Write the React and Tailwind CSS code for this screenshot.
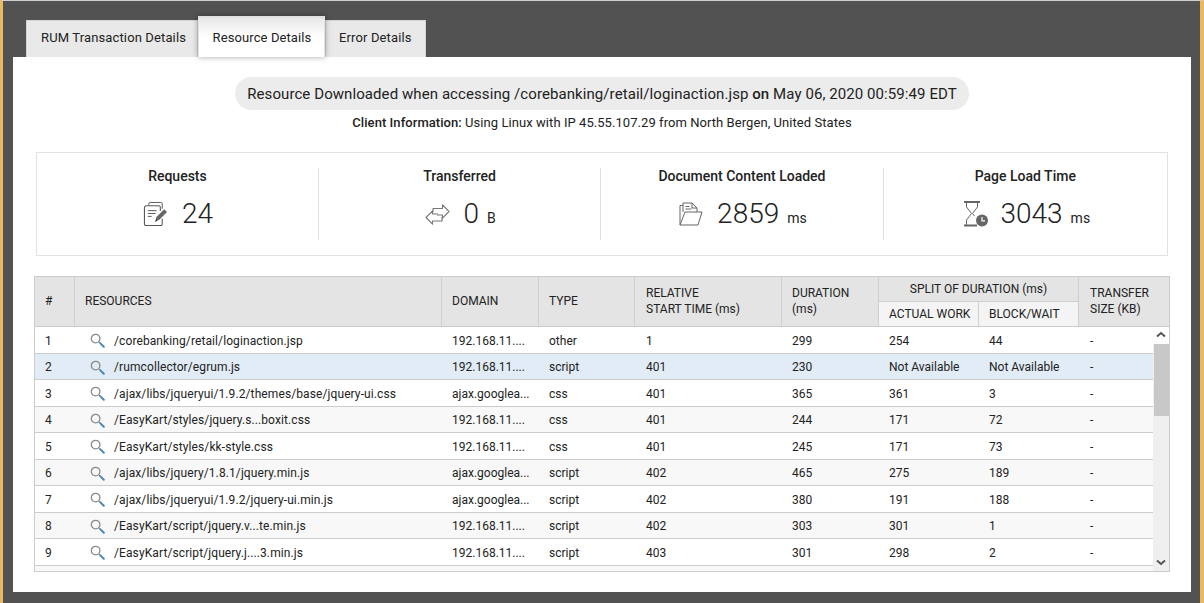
const ROWS = [
  ['1', '/corebanking/retail/loginaction.jsp', '192.168.11....', 'other', '1', '299', '254', '44'],
  ['2', '/rumcollector/egrum.js', '192.168.11....', 'script', '401', '230', 'Not Available', 'Not Available'],
  ['3', '/ajax/libs/jqueryui/1.9.2/themes/base/jquery-ui.css', 'ajax.googlea...', 'css', '401', '365', '361', '3'],
  ['4', '/EasyKart/styles/jquery.s...boxit.css', '192.168.11....', 'css', '401', '244', '171', '72'],
  ['5', '/EasyKart/styles/kk-style.css', '192.168.11....', 'css', '401', '245', '171', '73'],
  ['6', '/ajax/libs/jquery/1.8.1/jquery.min.js', 'ajax.googlea...', 'script', '402', '465', '275', '189'],
  ['7', '/ajax/libs/jqueryui/1.9.2/jquery-ui.min.js', 'ajax.googlea...', 'script', '402', '380', '191', '188'],
  ['8', '/EasyKart/script/jquery.v...te.min.js', '192.168.11....', 'script', '402', '303', '301', '1'],
  ['9', '/EasyKart/script/jquery.j....3.min.js', '192.168.11....', 'script', '403', '301', '298', '2'],
];

function SearchIcon() {
  return (
    <svg width="15" height="15" viewBox="0 0 15 15" fill="none" className="shrink-0">
      <circle cx="5.6" cy="5.6" r="4.3" stroke="#8a8a8a" strokeWidth="1.3" />
      <path d="M9 9l1.4 1.4" stroke="#8a8a8a" strokeWidth="1.2" />
      <path d="M10.4 10.4l3.4 3.4" stroke="#4a86b8" strokeWidth="2" strokeLinecap="round" />
    </svg>
  );
}

function RequestsIcon() {
  return (
    <svg width="25" height="26" viewBox="0 0 26 26" fill="none">
      <path d="M6 3.5V2.5a1.5 1.5 0 0 1 1.5-1.5h11a1.5 1.5 0 0 1 1.5 1.5v5" stroke="#555" strokeWidth="1" />
      <path d="M20 18v5.5a1.5 1.5 0 0 1-1.5 1.5H3a1.5 1.5 0 0 1-1.5-1.5v-17A2 2 0 0 1 3.5 4.500h13A1.500 1.500 0 0 1 18 6v4" stroke="#555" strokeWidth="1.1" />
      <path d="M5 9.500h9M5 12.500h8M5 15.500h4" stroke="#555" strokeWidth="1" />
      <path d="M13 20l1-4 8-8 3 3-8 8z" fill="#666" />
      <path d="M12.500 21l1.200-2.500 1.500 1.500z" fill="#222" />
    </svg>
  );
}

function TransferIcon() {
  return (
    <svg width="25" height="21" viewBox="0 0 25 21" fill="none" stroke="#777" strokeWidth="1.100" strokeLinejoin="round">
      <path d="M8 8V4.500h9.500V0.800L24 7.500l-6.500 6.700V11H12" />
      <path d="M17 13v4H7.500v3.200L1 13.500 7.500 6.800V10H13" />
    </svg>
  );
}

function FolderIcon() {
  return (
    <svg width="24" height="24" viewBox="0 0 24 24" fill="none" stroke="#666" strokeWidth="1">
      <path d="M1 23V3.500h3" />
      <path d="M4 10V1h9l5 5v4" />
      <path d="M13 1v5h5" />
      <path d="M6.500 4.500h4M6.500 7h6" />
      <path d="M1 23l5-13h17l-4 13z" />
    </svg>
  );
}

function HourglassIcon() {
  return (
    <svg width="24" height="26" viewBox="0 0 24 26" fill="none">
      <path d="M0 1h16M0 24.500h13" stroke="#666" strokeWidth="1.800" />
      <path d="M2.500 2v4l5 6.500-5 6.500v5M13.500 2v4l-5 6.500 2 2.500" stroke="#666" strokeWidth="1" />
      <circle cx="18" cy="19.500" r="6" fill="#666" />
      <path d="M18 16v3.800h3" stroke="#fff" strokeWidth="1.200" />
    </svg>
  );
}

function Stat({ title, value, unit, icon, gap, width, divider }) {
  return (
    <div className={`flex h-[72px] flex-col items-center ${width} ${divider ? 'border-r border-[#e0e0e0]' : ''}`}>
      <div className="-mt-[1px] text-[14px] leading-[18px] font-medium text-[#222]">{title}</div>
      <div className={`mt-[11px] flex h-[36px] items-center ${gap}`}>
        {icon}
        <div className="flex items-baseline gap-[8px]">
          <span className="text-[28px] leading-[36px] font-light text-[#222]">{value}</span>
          {unit && <span className="text-[14px] text-[#222]">{unit}</span>}
        </div>
      </div>
    </div>
  );
}

function Tab({ label, active, className }) {
  if (active) {
    return (
      <div className="z-10 -mt-1 flex h-[41px] w-[127px] items-center justify-center border-x border-t-2 border-[#e2e2e2] bg-gradient-to-b from-[#e8e8e8] via-white to-white pl-[1px] text-[13px] tracking-[0.1px] text-[#222] shadow-[0_0_6px_rgba(0,0,0,0.35)]">
        {label}
      </div>
    );
  }
  return (
    <div className={`flex h-[37px] items-center border-x border-t border-[#d4d4d4] bg-[#e9e9e9] pb-[2px] text-[13px] tracking-[0.13px] text-[#222] ${className}`}>
      {label}
    </div>
  );
}

function HeadCell({ className, children }) {
  return <div className={`flex items-center border-r border-[#cfcfcf] px-[10px] pb-[2px] leading-[16px] ${className}`}>{children}</div>;
}

function Row({ row, index }) {
  const bg = row[0] === '2' ? 'bg-[#e1ecf6]' : index % 2 === 0 ? 'bg-white' : 'bg-[#f8f8f8]';
  return (
    <div className={`flex h-[26.500px] items-center border-b-[1px] border-[#cccccc] pt-[1.500px] text-[12px] text-[#222] ${bg}`}>
      <div className="w-[40px] pl-[10px]">{row[0]}</div>
      <div className="flex w-[367px] items-center gap-[9px] pl-[15px]">
        <SearchIcon />
        <span className="tracking-[0.1px]">{row[1]}</span>
      </div>
      <div className="w-[97px] pl-[10px]">{row[2]}</div>
      <div className="w-[96px] pl-[10px]">{row[3]}</div>
      <div className="w-[147px] pl-[11px]">{row[4]}</div>
      <div className="w-[97px] pl-[10px]">{row[5]}</div>
      <div className="w-[100px] pl-[10px]">{row[6]}</div>
      <div className="w-[100px] pl-[10px]">{row[7]}</div>
      <div className="pl-[11px]">-</div>
    </div>
  );
}

export default function App() {
  return (
    <div className="h-[603px] w-[1204px] overflow-hidden border-l-[3px] border-r-[4px] border-t-[1px] border-[#e9b95f] border-t-[#cfcfcf] bg-[#525252] font-['Roboto',sans-serif]">
      <div className="flex h-[56px] items-end pl-[23px]">
        <Tab label="RUM Transaction Details" className="w-[172px] pl-[14px]" />
        <Tab label="Resource Details" active />
        <Tab label="Error Details" className="w-[101px] pl-[13px]" />
      </div>

      <div className="relative ml-[10px] h-[535px] w-[1178px] bg-white pt-[20px]">
        <div className="flex flex-col items-center">
          <div className="flex h-[33px] items-center rounded-full bg-[#ececec] px-[12px] pt-[1px] text-[15px] tracking-[0.08px] text-[#222]">
            <span>Resource Downloaded when accessing /corebanking/retail/loginaction.jsp&nbsp;</span>
            <span className="font-medium">on</span>
            <span>&nbsp;May 06, 2020 00:59:49 EDT</span>
          </div>
          <div className="mt-[4px] text-[13px] leading-[18px] tracking-[0.06px] text-[#222]">
            <span className="font-medium">Client Information:</span> Using Linux with IP 45.55.107.29 from North Bergen, United States
          </div>
        </div>

        <div className="mt-[20px] ml-[23px] flex h-[104px] w-[1132px] items-center border border-[#e2e2e2]">
          <Stat title="Requests" value="24" icon={<RequestsIcon />} gap="ml-[1px] gap-[14px]" width="w-[282px]" divider />
          <Stat title="Transferred" value="0" unit="B" icon={<TransferIcon />} gap="ml-[2px] gap-[13px]" width="w-[282.500px]" divider />
          <Stat title="Document Content Loaded" value="2859" unit="ms" icon={<FolderIcon />} gap="ml-[2px] gap-[14px]" width="w-[282.500px]" divider />
          <Stat title="Page Load Time" value="3043" unit="ms" icon={<HourglassIcon />} gap="ml-[4px] gap-[12px]" width="w-[283.500px]" />
        </div>

        <div className="mt-[20px] ml-[21px] w-[1136px] border border-[#cccccc] text-[#222]">
          <div className="flex h-[50px] border-b border-[#cccccc] bg-[#e4e4e4] text-[12px]">
            <HeadCell className="w-[40px]">#</HeadCell>
            <HeadCell className="w-[367px]">RESOURCES</HeadCell>
            <HeadCell className="w-[97px]">DOMAIN</HeadCell>
            <HeadCell className="w-[96px]">TYPE</HeadCell>
            <HeadCell className="w-[147px] pl-[11px]">
              <span>RELATIVE<br />START TIME (ms)</span>
            </HeadCell>
            <HeadCell className="w-[97px]">
              <span>DURATION<br />(ms)</span>
            </HeadCell>
            <div className="flex w-[200px] flex-col border-r border-[#cfcfcf]">
              <div className="flex h-[25px] items-center justify-center border-b border-[#cfcfcf]">SPLIT OF DURATION (ms)</div>
              <div className="flex flex-1 bg-[#f4f4f4]">
                <div className="flex w-[100px] items-center border-r border-[#cfcfcf] pl-[10px]">ACTUAL WORK</div>
                <div className="flex items-center pl-[10px]">BLOCK/WAIT</div>
              </div>
            </div>
            <div className="flex items-center pb-[2px] pl-[11px] leading-[16px]">
              <span>TRANSFER<br />SIZE (KB)</span>
            </div>
          </div>

          <div className="flex h-[244px]">
            <div className="w-[1119px] overflow-hidden">
              {ROWS.map((row, i) => (
                <Row key={row[0]} row={row} index={i} />
              ))}
              <div className="h-[10px] bg-[#f8f8f8]" />
            </div>
            <div className="flex w-[16px] flex-col items-center bg-[#efefef]">
              <svg width="16" height="17" viewBox="0 0 16 17" fill="none" className="bg-white">
                <path d="M4 9.500L8 6l4 3.500" stroke="#555" strokeWidth="2" />
              </svg>
              <div className="h-[72px] w-[15px] bg-[#c8c8c8]" />
              <div className="flex-1" />
              <svg width="16" height="17" viewBox="0 0 16 17" fill="none">
                <path d="M4 6.500L8 10l4-3.500" stroke="#555" strokeWidth="2" />
              </svg>
            </div>
          </div>
        </div>
      </div>
    </div>
  );
}
